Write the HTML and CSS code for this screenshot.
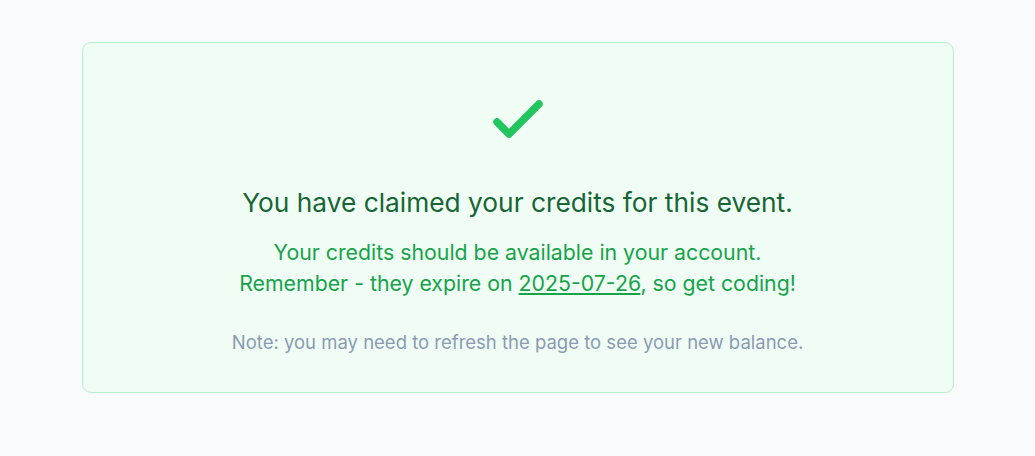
FILE: index.html
```html
<!DOCTYPE html>
<html lang="en">
<head>
<meta charset="utf-8">
<link rel="stylesheet" href="styles.css">
<title>Credits claimed</title>
</head>
<body>
<main class="page">
  <section class="card">
    <svg class="check" viewBox="0 0 24 24" fill="none" stroke="#22c55e" stroke-width="2.5" stroke-linecap="round" stroke-linejoin="round" aria-hidden="true">
      <path d="M5 13l4 4L19 7"/>
    </svg>
    <h1 class="title">You have claimed your credits for this event.</h1>
    <p class="info">Your credits should be available in your account.<br>Remember - they expire on <span class="date">2025-07-26</span>, so get coding!</p>
    <p class="note">Note: you may need to refresh the page to see your new balance.</p>
  </section>
</main>
</body>
</html>
```
FILE: styles.css
```css
html, body {
  margin: 0;
  padding: 0;
  background: #f8fafc;
}
body {
  font-family: Inter, "Liberation Sans", Arial, sans-serif;
}
.page {
  padding: 42px 0;
  display: flex;
  justify-content: center;
}
.card {
  box-sizing: border-box;
  width: 872px;
  height: 351px;
  background: #f0fdf4;
  border: 1px solid #b4f0c9;
  border-radius: 9px;
  display: flex;
  flex-direction: column;
  align-items: center;
  text-align: center;
  padding-top: 40px;
}
.check {
  width: 72px;
  height: 72px;
  display: block;
}
.title {
  margin: 30px 0 0;
  font-size: 26.3px;
  line-height: 36px;
  font-weight: 400;
  color: #166534;
}
.info {
  margin: 16px 0 0;
  font-size: 21.3px;
  line-height: 31px;
  color: #16a34a;
}
.date {
  text-decoration: underline;
  text-decoration-thickness: 1.5px;
  text-underline-offset: 2px;
}
.note {
  margin: 30px 0 0;
  font-size: 18.5px;
  line-height: 26px;
  color: #8b9ab3;
}
```
